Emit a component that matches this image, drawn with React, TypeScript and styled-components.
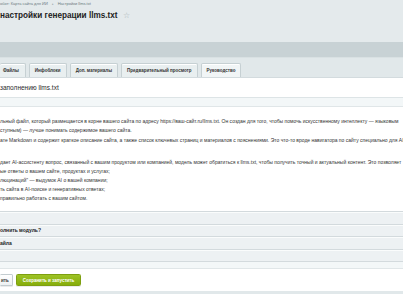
import styled, { createGlobalStyle } from 'styled-components'

const GlobalStyle = createGlobalStyle`
  html, body {
    margin: 0;
    padding: 0;
  }
  body {
    width: 403px;
    height: 294px;
    overflow: hidden;
    background: #e4eaec;
    font-family: 'Liberation Sans', Arial, sans-serif;
    color: #333;
  }
`

const Page = styled.div`
  display: flex;
  flex-direction: column;
  width: 403px;
  height: 294px;
`

const Breadcrumbs = styled.div`
  display: flex;
  align-items: center;
  gap: 4px;
  height: 8px;
  font-size: 4px;
  color: #6b7a80;
`

const CrumbSep = styled.span`
  font-size: 3px;
  color: #9aa6ab;
`

const TitleRow = styled.div`
  display: flex;
  align-items: center;
  gap: 5px;
  height: 16px;
  margin-bottom: 18px;
`

const Title = styled.h1`
  margin: 0;
  font-size: 8.2px;
  font-weight: bold;
  color: #222;
`

const Star = styled.span`
  font-size: 8px;
  line-height: 1;
  color: #a9b4b8;
`

const Band = styled.div`
  height: 15px;
  background: #c8d2d5;
  border-bottom: 1px solid #d9e1e3;
`

const TabStrip = styled.div`
  display: flex;
  align-items: flex-end;
  gap: 3px;
  height: 19px;
  background: #e1e8ea;
  border-bottom: 1px solid #d3dbde;
`

const Tab = styled.div<{ $active?: boolean; $clipped?: boolean }>`
  display: flex;
  align-items: center;
  height: 13px;
  padding: ${(p) => (p.$clipped ? '0 6px 0 3px' : '0 5px')};
  font-size: 4.5px;
  font-weight: bold;
  color: #333;
  background: ${(p) => (p.$active ? '#f1f5f6' : '#e9eff0')};
  border: 1px solid #c6d0d3;
  border-bottom: none;
  border-left-width: ${(p) => (p.$clipped ? 0 : '1px')};
  border-radius: 2px 2px 0 0;
  box-shadow: inset 0 1px 0 #fff;
`

const Content = styled.div`
  flex: 1;
  display: flex;
  flex-direction: column;
  background: #fff;
`

const Heading = styled.div`
  height: 19px;
  display: flex;
  align-items: center;
  font-size: 6.5px;
  color: #2b2b2b;
  border-bottom: 1px solid #dde4e6;
`

const PaleStrip = styled.div<{ $height: number }>`
  height: ${(p) => p.$height}px;
  background: #f3f7f8;
  border-bottom: 1px solid #e0e6e8;
`

const TextBlock = styled.div`
  padding: 10.5px 0 8px;
  font-size: 5px;
  line-height: 9px;
  color: #333;
  white-space: nowrap;
  overflow: hidden;
`

const Para = styled.div<{ $gap?: number }>`
  margin-bottom: ${(p) => p.$gap ?? 0}px;
`

const Row = styled.div`
  height: 11.5px;
  display: flex;
  align-items: center;
  background: #edf1f3;
  border-top: 1px solid #d3dadd;
  box-shadow: inset 0 1px 0 #fafcfc;
  font-size: 5px;
  font-weight: bold;
  color: #222;
`

const RowsEnd = styled.div`
  border-top: 1px solid #d3dadd;
`

const ButtonBar = styled.div`
  height: 22px;
  display: flex;
  align-items: center;
  gap: 3px;
`

const Button = styled.div<{ $primary?: boolean }>`
  height: 10px;
  display: flex;
  align-items: center;
  padding: ${(p) => (p.$primary ? '0 6px' : '0 3px 0 1px')};
  font-size: 4.5px;
  font-weight: bold;
  border-radius: 1.5px;
  color: ${(p) => (p.$primary ? '#fff' : '#333')};
  background: ${(p) =>
    p.$primary ? 'linear-gradient(#9dc325, #86ad0b)' : 'linear-gradient(#fff, #eef1f2)'};
  border: 1px solid ${(p) => (p.$primary ? '#7e9f10' : '#c3ccd0')};
  border-left-width: ${(p) => (p.$primary ? '1px' : 0)};
  box-shadow: 0 1px 0 rgba(0, 0, 0, 0.08);
`

const Footer = styled.div`
  height: 3px;
  background: #e1e8ea;
`

export default function App() {
  return (
    <Page>
      <GlobalStyle />
      <Breadcrumbs>
        <span>обот: Карта сайта для ИИ</span>
        <CrumbSep>●</CrumbSep>
        <span>Настройки llms.txt</span>
      </Breadcrumbs>
      <TitleRow>
        <Title>настройки генерации llms.txt</Title>
        <Star>☆</Star>
      </TitleRow>
      <Band />
      <TabStrip>
        <Tab $clipped>Файлы</Tab>
        <Tab>Инфоблоки</Tab>
        <Tab>Доп. материалы</Tab>
        <Tab>Предварительный просмотр</Tab>
        <Tab $active>Руководство</Tab>
      </TabStrip>
      <Content>
        <Heading>заполнению llms.txt</Heading>
        <PaleStrip $height={8} />
        <TextBlock>
          <div>
            льный файл, который размещается в корне вашего сайта по адресу https://ваш-сайт.ru/llms.txt. Он создан для того, чтобы помочь искусственному интеллекту — языковым
          </div>
          <Para $gap={1}>ступным) — лучше понимать содержимое вашего сайта.</Para>
          <Para $gap={2}>
            ате Markdown и содержит краткое описание сайта, а также список ключевых страниц и материалов с пояснениями. Это что-то вроде навигатора по сайту специально для AI
          </Para>
          <Para $gap={2}>&nbsp;</Para>
          <div>
            дает AI-ассистенту вопрос, связанный с вашим продуктом или компанией, модель может обратиться к llms.txt, чтобы получить точный и актуальный контент. Это позволяет
          </div>
          <div>ые ответы о вашем сайте, продуктах и услугах;</div>
          <div>люцинаций" — выдумок AI о вашей компании;</div>
          <div>ть сайта в AI-поиске и генеративных ответах;</div>
          <div>правильно работать с вашим сайтом.</div>
        </TextBlock>
        <Row />
        <Row>олнить модуль?</Row>
        <Row>айла</Row>
        <Row />
        <RowsEnd />
        <PaleStrip $height={6} />
        <ButtonBar>
          <Button>ить</Button>
          <Button $primary>Сохранить и запустить</Button>
        </ButtonBar>
        <Footer />
      </Content>
    </Page>
  )
}
